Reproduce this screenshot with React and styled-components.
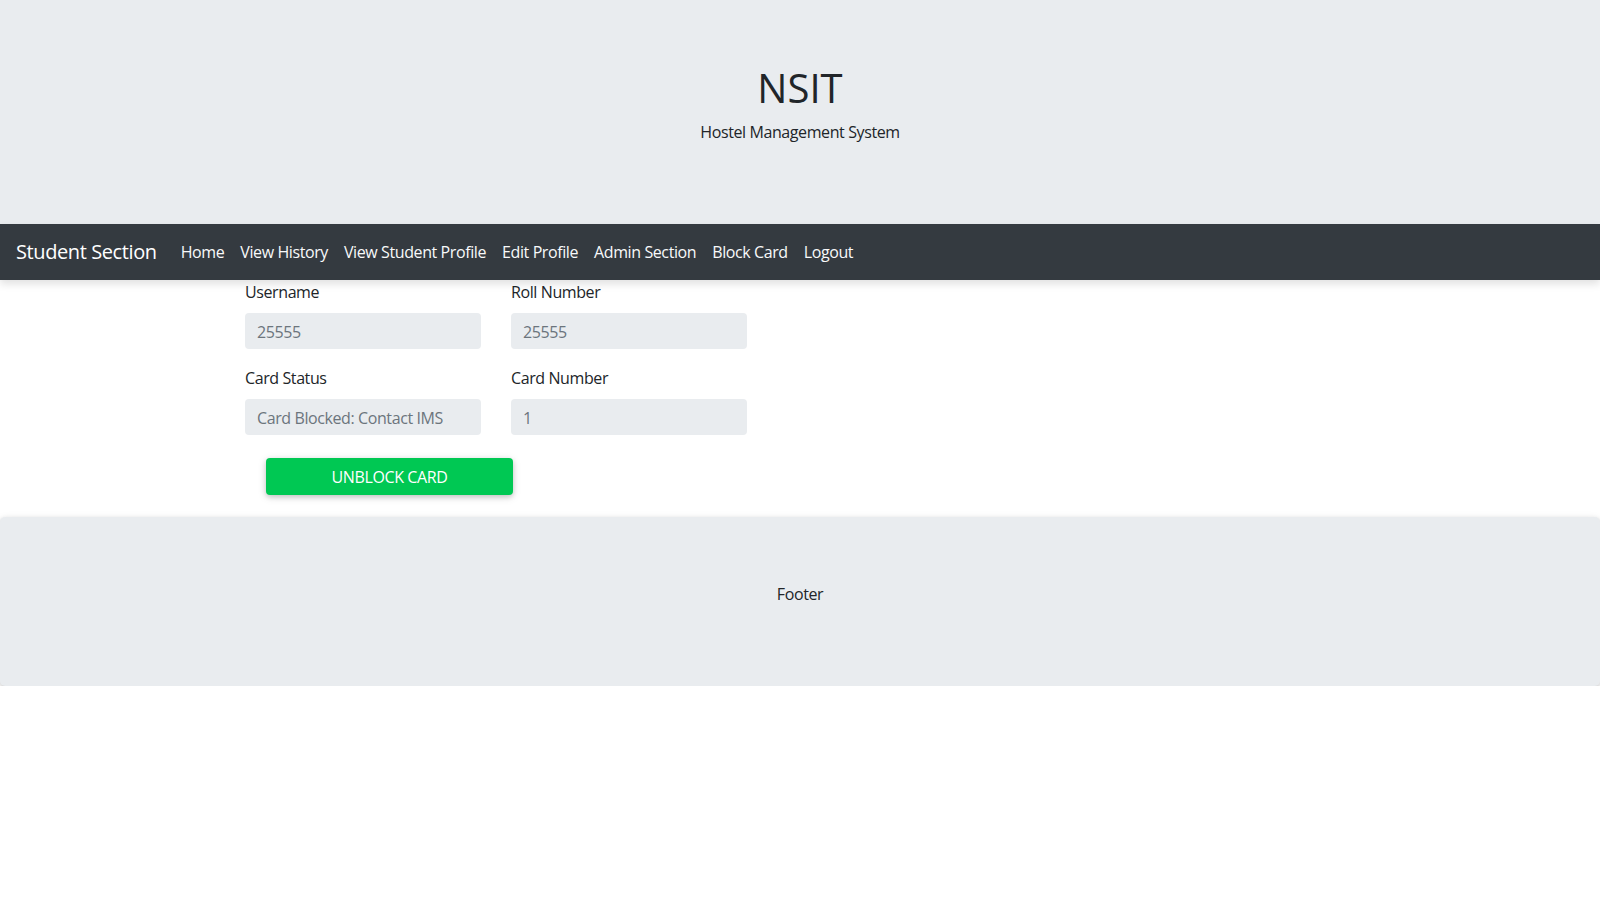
import React from "react";
import styled, { createGlobalStyle } from "styled-components";

const GlobalStyle = createGlobalStyle`
  * { box-sizing: border-box; }
  html, body { margin: 0; padding: 0; }
  body {
    background: #fff;
    color: #212529;
    font-family: "Open Sans", "Noto Sans", "Liberation Sans", sans-serif;
    font-size: 16px;
    line-height: 1.5;
    letter-spacing: -0.025em;
  }
`;

const Header = styled.header`
  background: #e9ecef;
  padding: 64px 32px;
  text-align: center;
  height: 224px;
`;

const Title = styled.h1`
  margin: 0 0 8px;
  font-size: 40px;
  font-weight: 400;
  line-height: 48px;
  letter-spacing: 0;
  color: #212529;
`;

const Subtitle = styled.p`
  margin: 0;
  font-size: 16px;
  line-height: 24px;
`;

const Navbar = styled.nav`
  display: flex;
  align-items: center;
  height: 56px;
  padding: 0 16px;
  background: #343a40;
  box-shadow: 0 4px 8px rgba(0, 0, 0, 0.12);
  position: relative;
`;

const Brand = styled.a`
  color: #fff;
  font-size: 20px;
  line-height: 30px;
  margin-right: 16px;
  text-decoration: none;
`;

const NavList = styled.ul`
  display: flex;
  list-style: none;
  margin: 0;
  padding: 0;
`;

const NavLink = styled.a`
  display: block;
  padding: 0 8px;
  color: #f8f9fa;
  text-decoration: none;
  font-size: 16px;
  line-height: 24px;
`;

const Main = styled.main`
  padding: 0 0 0 245px;
`;

const FormGrid = styled.div`
  display: grid;
  grid-template-columns: 236px 236px;
  column-gap: 30px;
`;

const Group = styled.div`
  margin-bottom: 17px;
`;

const Label = styled.label`
  display: block;
  margin-bottom: 9px;
  line-height: 24px;
  color: #212529;
`;

const Input = styled.input`
  display: block;
  width: 100%;
  height: 36px;
  padding: 2px 12px 0;
  border: none;
  border-radius: 4px;
  background: #e9ecef;
  color: #6c757d;
  font-family: inherit;
  font-size: 16px;
  letter-spacing: inherit;
  outline: none;
`;

const Button = styled.button`
  display: block;
  margin: 6px 0 0 21px;
  width: 247px;
  height: 37px;
  border: none;
  border-radius: 4px;
  background: #00c853;
  color: #fff;
  font-family: inherit;
  font-size: 16px;
  letter-spacing: inherit;
  text-transform: uppercase;
  box-shadow: 0 2px 5px rgba(0, 0, 0, 0.16), 0 2px 10px rgba(0, 0, 0, 0.12);
  cursor: pointer;
`;

const Footer = styled.footer`
  margin-top: 22px;
  background: #e9ecef;
  border-radius: 5px;
  padding: 65px 32px 64px;
  text-align: center;
  box-shadow: 0 2px 5px rgba(0, 0, 0, 0.16), 0 2px 10px rgba(0, 0, 0, 0.08);
`;

const FooterText = styled.p`
  margin: 0 0 16px;
  line-height: 24px;
`;

const links = [
  "Home",
  "View History",
  "View Student Profile",
  "Edit Profile",
  "Admin Section",
  "Block Card",
  "Logout",
];

const fields = [
  { label: "Username", value: "25555" },
  { label: "Roll Number", value: "25555" },
  { label: "Card Status", value: "Card Blocked: Contact IMS" },
  { label: "Card Number", value: "1" },
];

export default function App() {
  return (
    <>
      <GlobalStyle />
      <Header>
        <Title>NSIT</Title>
        <Subtitle>Hostel Management System</Subtitle>
      </Header>
      <Navbar>
        <Brand href="#">Student Section</Brand>
        <NavList>
          {links.map((l) => (
            <li key={l}>
              <NavLink href="#">{l}</NavLink>
            </li>
          ))}
        </NavList>
      </Navbar>
      <Main>
        <FormGrid>
          {fields.map((f) => (
            <Group key={f.label}>
              <Label>{f.label}</Label>
              <Input disabled value={f.value} readOnly />
            </Group>
          ))}
        </FormGrid>
        <Button>Unblock Card</Button>
      </Main>
      <Footer>
        <FooterText>Footer</FooterText>
      </Footer>
    </>
  );
}
